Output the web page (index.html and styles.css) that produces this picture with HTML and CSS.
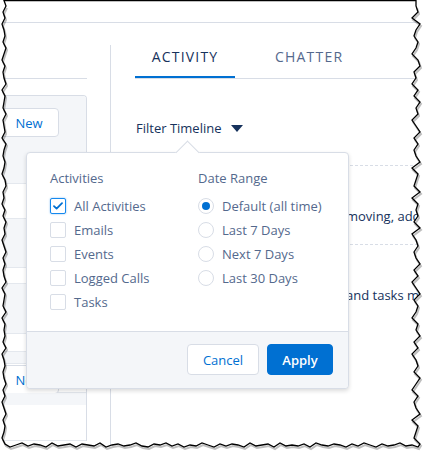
FILE: index.html
```html
<!DOCTYPE html>
<html>
<head>
<meta charset="utf-8">
<link rel="stylesheet" href="styles.css">
</head>
<body>
<div class="page">
  <header class="topbar"></header>
  <div class="main">
    <aside class="left">
      <div class="l-head"></div>
      <div class="l-card">
        <div class="l-row g first"><button class="btn-new">New</button></div>
        <div class="l-row w h34"></div>
        <div class="l-row g h48"></div>
        <div class="l-row w h15"></div>
        <div class="l-row g h49"></div>
        <div class="l-row w h17"></div>
        <div class="l-row g h11"></div>
        <div class="l-row w second"><button class="btn-new">New</button></div>
        <div class="l-row g h11 nob"></div>
        <div class="l-row w h35"></div>
      </div>
    </aside>
    <section class="feed">
      <nav class="tabs">
        <span class="tab active">ACTIVITY</span>
        <span class="tab">CHATTER</span>
      </nav>
      <div class="filter">
        <span>Filter Timeline</span>
        <svg class="caret" width="12" height="7" viewBox="0 0 12 7"><path d="M0 0h12L6 7z" fill="#16325c"/></svg>
      </div>
      <div class="dash"></div>
      <p class="item">moving, add a task or set up a meeting.</p>
      <div class="dash"></div>
      <p class="item">and tasks marked as done show up here.</p>
    </section>
  </div>

  <div class="popover">
    <div class="nubbin"></div>
    <div class="pop-body">
      <div class="col col-act">
        <div class="col-label">Activities</div>
        <label class="opt"><span class="cb checked"><svg width="10" height="8" viewBox="0 0 10 8"><path d="M1 4.2l2.6 2.4L9 1.2" fill="none" stroke="#0070d2" stroke-width="1.8" stroke-linecap="round" stroke-linejoin="round"/></svg></span>All Activities</label>
        <label class="opt"><span class="cb"></span>Emails</label>
        <label class="opt"><span class="cb"></span>Events</label>
        <label class="opt"><span class="cb"></span>Logged Calls</label>
        <label class="opt"><span class="cb"></span>Tasks</label>
      </div>
      <div class="col">
        <div class="col-label">Date Range</div>
        <label class="opt"><span class="rd checked"></span>Default (all time)</label>
        <label class="opt"><span class="rd"></span>Last 7 Days</label>
        <label class="opt"><span class="rd"></span>Next 7 Days</label>
        <label class="opt"><span class="rd"></span>Last 30 Days</label>
      </div>
    </div>
    <div class="pop-foot">
      <button class="btn btn-neutral">Cancel</button>
      <button class="btn btn-brand">Apply</button>
    </div>
  </div>

  <svg class="frame" width="428" height="458" viewBox="0 0 428 458">
    <path fill="#fff" fill-rule="evenodd" d="M0 0H428V458H0Z M4 0.5 L6 6 L3 12 L5 18 L2 24 L4 30 L5 36 L3 42 L6 48 L4 54 L2 60 L5 66 L3 72 L4 78 L6 84 L2 90 L5 96 L4 102 L3 108 L6 114 L3 120 L4 126 L5 132 L2 138 L6 144 L4 150 L3 156 L5 162 L4 168 L2 174 L5 180 L6 186 L3 192 L4 198 L2 204 L5 210 L3 216 L6 222 L4 228 L5 234 L2 240 L4 246 L6 252 L3 258 L5 264 L3 270 L4 276 L6 282 L2 288 L5 294 L4 300 L3 306 L6 312 L2 318 L5 324 L4 330 L5 336 L3 342 L6 348 L2 354 L4 360 L5 366 L3 372 L4 378 L6 384 L3 390 L5 396 L2 402 L4 408 L6 414 L3 420 L5 426 L4 432 L2 438 L5 444 L10 447 L16 445 L22 443 L28 446 L34 444 L40 445 L46 447 L52 443 L58 446 L64 445 L70 444 L76 447 L82 444 L88 445 L94 446 L100 443 L106 447 L112 445 L118 444 L124 446 L130 445 L136 443 L142 446 L148 447 L154 444 L160 445 L166 443 L172 446 L178 444 L184 447 L190 445 L196 446 L202 443 L208 445 L214 447 L220 444 L226 446 L232 444 L238 445 L244 447 L250 443 L256 446 L262 445 L268 444 L274 447 L280 443 L286 446 L292 445 L298 446 L304 444 L310 447 L316 443 L322 445 L328 446 L334 444 L340 445 L346 447 L352 444 L358 446 L364 443 L370 445 L376 447 L382 444 L388 446 L394 445 L400 443 L406 446 L412 445 L418 447 L420 444 L414 438 L416 432 L418 426 L412 420 L420 414 L416 408 L414 402 L418 396 L412 390 L416 384 L420 378 L414 372 L418 366 L416 360 L412 354 L418 348 L414 342 L420 336 L416 330 L418 324 L412 318 L416 312 L418 306 L414 300 L420 294 L416 288 L412 282 L418 276 L414 270 L420 264 L416 258 L414 252 L418 246 L416 240 L412 234 L420 228 L414 222 L418 216 L416 210 L418 204 L412 198 L420 192 L414 186 L416 180 L418 174 L412 168 L420 162 L416 156 L414 150 L418 144 L414 138 L420 132 L416 126 L412 120 L418 114 L416 108 L420 102 L414 96 L418 90 L412 84 L416 78 L414 72 L420 66 L418 60 L412 54 L416 48 L418 42 L414 36 L416 30 L420 24 L412 18 L418 12 L416 6 L416 0.5 Z"/>
    <polyline class="edge-shadow" points="6,6 3,12 5,18 2,24 4,30 5,36 3,42 6,48 4,54 2,60 5,66 3,72 4,78 6,84 2,90 5,96 4,102 3,108 6,114 3,120 4,126 5,132 2,138 6,144 4,150 3,156 5,162 4,168 2,174 5,180 6,186 3,192 4,198 2,204 5,210 3,216 6,222 4,228 5,234 2,240 4,246 6,252 3,258 5,264 3,270 4,276 6,282 2,288 5,294 4,300 3,306 6,312 2,318 5,324 4,330 5,336 3,342 6,348 2,354 4,360 5,366 3,372 4,378 6,384 3,390 5,396 2,402 4,408 6,414 3,420 5,426 4,432 2,438 5,444 10,447 16,445 22,443 28,446 34,444 40,445 46,447 52,443 58,446 64,445 70,444 76,447 82,444 88,445 94,446 100,443 106,447 112,445 118,444 124,446 130,445 136,443 142,446 148,447 154,444 160,445 166,443 172,446 178,444 184,447 190,445 196,446 202,443 208,445 214,447 220,444 226,446 232,444 238,445 244,447 250,443 256,446 262,445 268,444 274,447 280,443 286,446 292,445 298,446 304,444 310,447 316,443 322,445 328,446 334,444 340,445 346,447 352,444 358,446 364,443 370,445 376,447 382,444 388,446 394,445 400,443 406,446 412,445 418,447 420,444 414,438 416,432 418,426 412,420 420,414 416,408 414,402 418,396 412,390 416,384 420,378 414,372 418,366 416,360 412,354 418,348 414,342 420,336 416,330 418,324 412,318 416,312 418,306 414,300 420,294 416,288 412,282 418,276 414,270 420,264 416,258 414,252 418,246 416,240 412,234 420,228 414,222 418,216 416,210 418,204 412,198 420,192 414,186 416,180 418,174 412,168 420,162 416,156 414,150 418,144 414,138 420,132 416,126 412,120 418,114 416,108 420,102 414,96 418,90 412,84 416,78 414,72 420,66 418,60 412,54 416,48 418,42 414,36 416,30 420,24 412,18 418,12 416,6"/>
    <polygon class="edge" points="4,0.5 6,6 3,12 5,18 2,24 4,30 5,36 3,42 6,48 4,54 2,60 5,66 3,72 4,78 6,84 2,90 5,96 4,102 3,108 6,114 3,120 4,126 5,132 2,138 6,144 4,150 3,156 5,162 4,168 2,174 5,180 6,186 3,192 4,198 2,204 5,210 3,216 6,222 4,228 5,234 2,240 4,246 6,252 3,258 5,264 3,270 4,276 6,282 2,288 5,294 4,300 3,306 6,312 2,318 5,324 4,330 5,336 3,342 6,348 2,354 4,360 5,366 3,372 4,378 6,384 3,390 5,396 2,402 4,408 6,414 3,420 5,426 4,432 2,438 5,444 10,447 16,445 22,443 28,446 34,444 40,445 46,447 52,443 58,446 64,445 70,444 76,447 82,444 88,445 94,446 100,443 106,447 112,445 118,444 124,446 130,445 136,443 142,446 148,447 154,444 160,445 166,443 172,446 178,444 184,447 190,445 196,446 202,443 208,445 214,447 220,444 226,446 232,444 238,445 244,447 250,443 256,446 262,445 268,444 274,447 280,443 286,446 292,445 298,446 304,444 310,447 316,443 322,445 328,446 334,444 340,445 346,447 352,444 358,446 364,443 370,445 376,447 382,444 388,446 394,445 400,443 406,446 412,445 418,447 420,444 414,438 416,432 418,426 412,420 420,414 416,408 414,402 418,396 412,390 416,384 420,378 414,372 418,366 416,360 412,354 418,348 414,342 420,336 416,330 418,324 412,318 416,312 418,306 414,300 420,294 416,288 412,282 418,276 414,270 420,264 416,258 414,252 418,246 416,240 412,234 420,228 414,222 418,216 416,210 418,204 412,198 420,192 414,186 416,180 418,174 412,168 420,162 416,156 414,150 418,144 414,138 420,132 416,126 412,120 418,114 416,108 420,102 414,96 418,90 412,84 416,78 414,72 420,66 418,60 412,54 416,48 418,42 414,36 416,30 420,24 412,18 418,12 416,6 416,0.5"/>
  </svg>
</div>
</body>
</html>
```

FILE: styles.css
```css
* { box-sizing: border-box; }
html, body { margin: 0; padding: 0; background: #fff; }
body {
  font-family: "Open Sans", "Liberation Sans", sans-serif;
  font-size: 13px;
  color: #16325c;
}
.page {
  position: relative;
  width: 428px;
  height: 458px;
  overflow: hidden;
}
.topbar {
  height: 23px;
  border-bottom: 1px solid #d8dde6;
}
.main {
  display: flex;
  height: 435px;
}

/* left column */
.left {
  width: 110px;
  flex: none;
  padding-right: 23px;
}
.l-head {
  height: 56px;
  border-bottom: 1px solid #d8dde6;
  margin-bottom: 16px;
}
.l-card {
  border-top: 1px solid #d8dde6;
  border-right: 1px solid #d8dde6;
  border-top-right-radius: 4px;
  overflow: hidden;
}
.l-row { border-bottom: 1px solid #e4e8ee; }
.l-row.nob { border-bottom: none; }
.l-row.g { background: #f4f6f9; }
.l-row.w { background: #fff; }
.l-row.first { height: 88px; padding-top: 12px; }
.l-row.second { height: 29px; padding-top: 1px; }
.h34 { height: 35px; }
.h48 { height: 49px; }
.h15 { height: 16px; }
.h49 { height: 50px; }
.h17 { height: 18px; }
.h11 { height: 12px; }
.h35 { height: 36px; }
.btn-new {
  display: block;
  width: 60px;
  height: 29px;
  margin-left: -1px;
  border: 1px solid #d8dde6;
  border-radius: 4px;
  background: #fff;
  color: #0070d2;
  font: inherit;
  font-size: 13px;
  padding: 0;
}

/* feed */
.feed {
  flex: 1;
  min-width: 0;
  margin-top: 22px;
  border-left: 1px solid #d8dde6;
  padding-left: 24px;
}
.tabs {
  display: flex;
  border-bottom: 1px solid #d8dde6;
}
.tab {
  display: block;
  font-size: 14px;
  letter-spacing: 1.2px;
  line-height: 24px;
  height: 33px;
  color: #54698d;
  padding: 0 0 9px;
  margin-left: 40px;
}
.tab.active {
  width: 100px;
  margin-left: 0;
  text-align: center;
  color: #16325c;
  border-bottom: 2px solid #0070d2;
  padding-bottom: 7px;
}
.filter {
  display: flex;
  align-items: center;
  gap: 9px;
  margin-top: 39px;
  line-height: 20px;
  padding-left: 1px;
}
.caret { display: block; margin-top: 1px; }
.dash {
  border-top: 1px dashed #d8dde6;
  margin-top: 27px;
}
.item {
  margin: 40px 0 0;
  padding-left: 211px;
  line-height: 20px;
  white-space: nowrap;
  overflow: hidden;
}
.item + .dash { margin-top: 18px; }

/* popover */
.popover {
  position: absolute;
  left: 26px;
  top: 152px;
  width: 323px;
  height: 237px;
  background: #fff;
  border: 1px solid #d8dde6;
  border-radius: 4px;
  box-shadow: 0 2px 4px rgba(0, 0, 0, 0.14);
  display: flex;
  flex-direction: column;
}
.nubbin {
  position: absolute;
  top: -9px;
  left: 152px;
  width: 17px;
  height: 17px;
  background: #fff;
  border-top: 1px solid #d8dde6;
  border-left: 1px solid #d8dde6;
  transform: rotate(45deg);
}
.pop-body {
  position: relative;
  flex: 1;
  display: flex;
  padding: 15px 23px 0;
}
.col { display: flex; flex-direction: column; }
.col-act { width: 148px; }
.col-label {
  color: #54698d;
  line-height: 20px;
  margin-bottom: 6px;
}
.opt {
  display: flex;
  align-items: center;
  gap: 8px;
  height: 24px;
  color: #54698d;
}
.cb {
  width: 16px;
  height: 16px;
  border: 1px solid #d8dde6;
  border-radius: 2px;
  background: #fff;
  display: flex;
  align-items: center;
  justify-content: center;
}
.cb.checked {
  border-color: #1589ee;
  box-shadow: 0 0 2px #7fb8f0;
}
.cb svg { display: block; }
.rd {
  width: 16px;
  height: 16px;
  border: 1px solid #d8dde6;
  border-radius: 50%;
  background: #fff;
  position: relative;
}
.rd.checked::after {
  content: "";
  position: absolute;
  left: 3px;
  top: 3px;
  width: 8px;
  height: 8px;
  border-radius: 50%;
  background: #0070d2;
}
.pop-foot {
  height: 57px;
  border-top: 1px solid #d8dde6;
  background: #f4f6f9;
  border-radius: 0 0 4px 4px;
  display: flex;
  justify-content: flex-end;
  align-items: center;
  gap: 8px;
  padding: 0 15px 1px;
}
.btn {
  height: 31px;
  border-radius: 4px;
  font: inherit;
  font-size: 13px;
  padding: 0;
}
.btn-neutral {
  width: 72px;
  background: #fff;
  border: 1px solid #d8dde6;
  color: #0070d2;
}
.btn-brand {
  width: 66px;
  background: #0070d2;
  border: 1px solid #0070d2;
  color: #fff;
  font-weight: 600;
}

/* torn frame */
.frame {
  position: absolute;
  left: 0;
  top: 0;
  pointer-events: none;
}
.edge {
  fill: none;
  stroke: #000;
  stroke-width: 1.3;
}
.edge-shadow {
  fill: none;
  stroke: rgba(0, 0, 0, 0.25);
  stroke-width: 2;
  transform: translate(1px, 2px);
}
```
